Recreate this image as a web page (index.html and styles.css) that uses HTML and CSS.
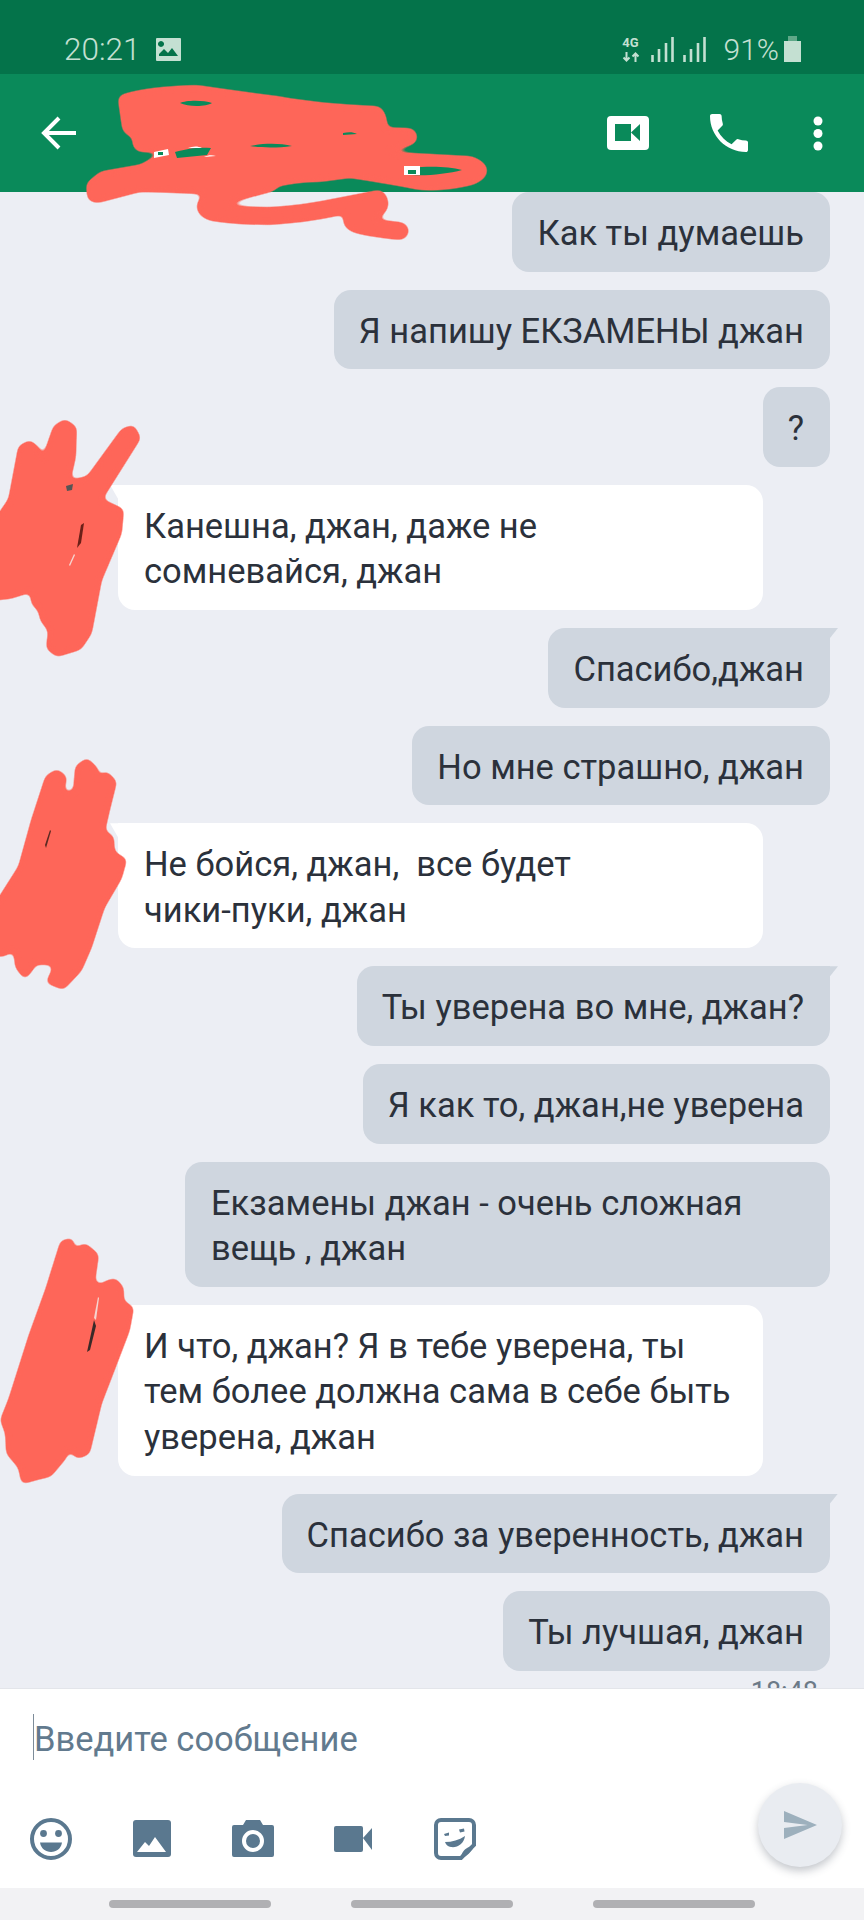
FILE: index.html
```html
<!DOCTYPE html>
<html lang="ru">
<head>
    <meta charset="UTF-8">
    <meta name="viewport" content="width=device-width, initial-scale=1.0">
    <title>Чат</title>
    <link rel="stylesheet" href="styles.css">
</head>
<body>
    <div class="phone">
        <div class="status">
            <div class="status-left">
                <span class="clock">20:21</span>
                <svg class="ico-pic" width="25" height="23" viewBox="0 0 25 23">
                    <path fill-rule="evenodd" d="M1 0h23a1 1 0 0 1 1 1v21a1 1 0 0 1-1 1H1a1 1 0 0 1-1-1V1a1 1 0 0 1 1-1zM3 16l5-5 4 4 4-5 6 8H3zM5 3a3 3 0 1 0 .01 0z" fill="#c4e0d2"/>
                </svg>
            </div>
            <div class="status-right">
                <div class="net">
                    <span class="net-label">4G</span>
                    <svg width="18" height="10" viewBox="0 0 18 10">
                        <path d="M4.500 0v8M1.500 5.500l3 3 3-3M13.500 10V2M10.500 4.500l3-3 3 3" fill="none" stroke="#c4e0d2" stroke-width="2"/>
                    </svg>
                </div>
                <svg class="signal" width="23" height="25" viewBox="0 0 23 25">
                    <path d="M1.500 25v-7M8 25v-13M15 25V6M21.500 25V0" stroke="#c4e0d2" stroke-width="2.600"/>
                </svg>
                <svg class="signal" width="23" height="25" viewBox="0 0 23 25">
                    <path d="M1.500 25v-7M8 25v-13M15 25V6M21.500 25V0" stroke="#c4e0d2" stroke-width="2.600"/>
                </svg>
                <span class="battery-text">91%</span>
                <svg width="17" height="26" viewBox="0 0 17 26">
                    <path d="M4 0h9v5H4z" fill="#5fa888"/>
                    <path d="M0 5h17v21H0z" fill="#c4e0d2"/>
                </svg>
            </div>
        </div>

        <div class="topbar">
            <svg class="back" width="36" height="34" viewBox="0 0 36 34">
                <path d="M35 17H3M18 2L3 17l15 15" fill="none" stroke="#fff" stroke-width="4"/>
            </svg>
            <div class="top-actions">
                <svg width="42" height="34" viewBox="0 0 42 34">
                    <rect width="42" height="34" rx="4" fill="#fff"/>
                    <path d="M8 8h16v17H8zM24 16.500L33 8v17z" fill="#0a8a5a"/>
                </svg>
                <svg class="call" width="38" height="38" viewBox="3 3 18 18">
                    <path fill="#fff" d="M6.620 10.790c1.440 2.830 3.760 5.140 6.590 6.590l2.200-2.200c.27-.27.67-.36 1.020-.24 1.120.37 2.330.57 3.570.57.55 0 1 .45 1 1V20c0 .55-.45 1-1 1-9.390 0-17-7.610-17-17 0-.55.45-1 1-1h3.500c.55 0 1 .45 1 1 0 1.250.2 2.450.57 3.570.11.35.03.74-.25 1.020l-2.200 2.200z"/>
                </svg>
                <svg class="dots" width="10" height="35" viewBox="0 0 10 35">
                    <circle cx="5" cy="5" r="4.500" fill="#fff"/>
                    <circle cx="5" cy="17.500" r="4.500" fill="#fff"/>
                    <circle cx="5" cy="30" r="4.500" fill="#fff"/>
                </svg>
            </div>
        </div>

        <div class="chat">
            <div class="msg out">Как ты думаешь</div>
            <div class="msg out">Я напишу ЕКЗАМЕНЫ джан</div>
            <div class="msg out">?</div>
            <div class="msg in first">Канешна, джан, даже не<br>сомневайся, джан</div>
            <div class="msg out first">Спасибо,джан</div>
            <div class="msg out">Но мне страшно, джан</div>
            <div class="msg in first">Не бойся, джан, &nbsp;все будет<br>чики-пуки, джан</div>
            <div class="msg out first">Ты уверена во мне, джан?</div>
            <div class="msg out">Я как то, джан,не уверена</div>
            <div class="msg out wide">Екзамены джан - очень сложная<br>вещь , джан</div>
            <div class="msg in first">И что, джан? Я в тебе уверена, ты<br>тем более должна сама в себе быть<br>уверена, джан</div>
            <div class="msg out first">Спасибо за уверенность, джан</div>
            <div class="msg out">Ты лучшая, джан</div>
            <div class="msg-time">18:48</div>
        </div>

        <div class="composer">
            <div class="input-row">
                <span class="caret"></span>
                <span class="placeholder">Введите сообщение</span>
            </div>
            <div class="tools">
                <svg width="44" height="44" viewBox="0 0 44 44">
                    <circle cx="22" cy="22" r="19" fill="none" stroke="#5a788f" stroke-width="4"/>
                    <circle cx="14.500" cy="16.500" r="3.400" fill="#5a788f"/>
                    <circle cx="29.500" cy="16.500" r="3.400" fill="#5a788f"/>
                    <path d="M11 25.500h22c-1 6-5.500 9.500-11 9.500s-10-3.500-11-9.500z" fill="#5a788f"/>
                </svg>
                <svg width="44" height="44" viewBox="0 0 44 44">
                    <rect x="3" y="3" width="38" height="37" rx="3" fill="#5a788f"/>
                    <path d="M7 35l8-10 4 4 6-9 11 15z" fill="#fff"/>
                </svg>
                <svg width="44" height="44" viewBox="0 0 44 44">
                    <path d="M3 8h9l3-5h14l3 5h9a2 2 0 0 1 2 2v28a2 2 0 0 1-2 2H3a2 2 0 0 1-2-2V10a2 2 0 0 1 2-2z" fill="#5a788f"/>
                    <circle cx="22" cy="24" r="9" fill="none" stroke="#fff" stroke-width="4"/>
                </svg>
                <svg width="44" height="44" viewBox="0 0 44 44">
                    <rect x="2" y="9" width="29" height="26" rx="2" fill="#5a788f"/>
                    <path d="M31 21l9-10v22z" fill="#5a788f"/>
                </svg>
                <svg width="44" height="44" viewBox="0 0 44 44">
                    <path d="M8 3h28a5 5 0 0 1 5 5v20L28 41H8a5 5 0 0 1-5-5V8a5 5 0 0 1 5-5z" fill="none" stroke="#5a788f" stroke-width="4"/>
                    <path d="M41 28c-1 1-12 2-13 13 4 0 13-8 13-13z" fill="#5a788f"/>
                    <path d="M11 17l5-1.500 0 3-4 .5zM26 12.500l5-1 .5 3-4.500 1zM12 25c7 0 14-2 20-6-1 8-8 12-14 11-3-.5-5-2-6-5z" fill="#5a788f"/>
                </svg>
            </div>
            <div class="send">
                <svg width="33" height="28" viewBox="2 3 21 18" preserveAspectRatio="none">
                    <path d="M2.010 21L23 12 2.010 3 2 10l15 2-15 2z" fill="#9db0bd"/>
                </svg>
            </div>
        </div>

        <div class="navbar">
            <span class="pill"></span>
            <span class="pill"></span>
            <span class="pill"></span>
        </div>

        <!-- scribbles drawn over the screenshot -->
        <svg class="scribbles" width="864" height="1920" viewBox="0 0 864 1920">
            <defs>
                <filter id="round" filterUnits="userSpaceOnUse" x="-20" y="0" width="600" height="1520" color-interpolation-filters="sRGB">
                    <feGaussianBlur stdDeviation="3"/>
                    <feComponentTransfer>
                        <feFuncA type="linear" slope="6" intercept="-2.500"/>
                    </feComponentTransfer>
                </filter>
            </defs>
            <g filter="url(#round)">
                <path d="M124 100Q150 92 197 91Q230 96 277 102Q320 110 377 112Q383 118 381 133L410 134Q414 138 408 140Q390 147 340 155L470 162Q492 170 472 179Q445 186 420 184Q390 178 350 172L320 176Q300 176 280 180L240 190L173 187L140 186L98 197L93 196L92 186L103 177L143 170L160 160L215 160L215 150L140 146L138 143L150 143L128 128Z" fill="#fe6659" stroke="#fe6659" stroke-width="12" stroke-linejoin="round"/>
                <path d="M270 183Q235 192 210 201Q200 208 212 212Q240 216 270 216Q305 214 337 207L378 199Q382 205 376 209L352 220Q350 226 400 231" fill="none" stroke="#fe6659" stroke-width="18" stroke-linecap="round" stroke-linejoin="round"/>
                <g fill="#fe6659" stroke="#fe6659" stroke-width="4" stroke-linejoin="round">
                    <path d="M55 427L65 421 75 428 74 457 68 483 78 480 88 478 123 430 133 427 139 438 100 500 107 503 122 510 120 533 100 580 90 633 80 648 57 655 48 648 50 630 42 620 40 610 33 603 32 590 10 597 -20 600 -20 543 10 500 20 447 30 442 39 450 40 470z"/>
                    <path d="M47 777L57 771 65 777 62 795 75 792 77 767 87 760 97 770 95 782 106 773 115 782 108 810 103 832 112 837 113 853 125 860 120 878 103 907 90 947 80 970 63 988 48 982 55 967 52 963 37 963 33 953 33 967 25 977 17 967 15 948 3 955 -20 953 -20 930 20 867 33 820z"/>
                    <path d="M62 1242L72 1240 72 1257 68 1272 75 1250 85 1245 97 1255 93 1283 102 1287 105 1283 115 1280 122 1288 122 1302 132 1308 128 1330 110 1377 100 1403 88 1453 78 1457 68 1447 65 1457 50 1475 37 1478 23 1482 20 1467 8 1453 7 1433 2 1420 10 1400 30 1337 47 1290z"/>
                </g>
            </g>
            <path d="M175 152c14-4 24-5 36-4l-4 7-30 3zM250 146c14-3 30-3 42 0-14 2-30 2-42 0zM180 103c6-3 24-3 32 0-6 4-24 4-32 0zM343 133c6-1 10-1 14 1l-14 1zM412 168c14-2 36-2 50 2-14 4-36 6-50 5z" fill="#0a8a5a"/>
            <path d="M154 152l14-3 1 6-15 3zM188 148c5-2 10-2 14 0zM204 157c4-2 8-2 12-1zM404 166h16v9h-16z" fill="#fff"/>
            <path d="M158 152h5v3h-5zM408 170h8v4h-8z" fill="#0a8a5a"/>
            <path d="M81 525l3-2-3 20-4 5z" fill="#6b2018"/>
            <path d="M66 486l7-2-1 6-5 1z" fill="#555"/>
            <path d="M50 830l1 1-5 17-1-3z" fill="#5a2a22"/>
            <path d="M94 1320l2 6-6 24-3 2z" fill="#3a2a28"/>
            <path d="M98 1297l1 1-3 22-2-2z" fill="#f5d5d0"/>
            <path d="M74 554l1 1-5 11-1-1z" fill="#f5d5d0"/>
        </svg>
    </div>
</body>
</html>
```

FILE: styles.css
```css
body {
    margin: 0;
    font-family: Roboto, "Liberation Sans", sans-serif;
}
.phone {
    position: relative;
    width: 864px;
    height: 1920px;
    overflow: hidden;
    background: #eceef4;
    display: flex;
    flex-direction: column;
}

/* status bar */
.status {
    height: 74px;
    flex: none;
    background: #04734a;
    color: #c4e0d2;
    display: flex;
    justify-content: space-between;
    align-items: center;
    padding: 24px 63px 0 64px;
    box-sizing: border-box;
}
.status-left {
    display: flex;
    align-items: center;
    gap: 15px;
}
.clock {
    font-size: 31.500px;
    font-weight: 300;
}
.status-right {
    display: flex;
    align-items: center;
}
.net {
    display: flex;
    flex-direction: column;
    align-items: center;
    gap: 4px;
    margin-right: 11px;
}
.net-label {
    font-size: 13px;
    line-height: 11px;
    font-weight: 700;
}
.signal {
    margin-right: 9px;
}
.battery-text {
    font-size: 30px;
    font-weight: 300;
    margin: 0 5px 0 9px;
}

/* header */
.topbar {
    height: 118px;
    flex: none;
    background: #0a8a5a;
    display: flex;
    justify-content: space-between;
    align-items: center;
    padding: 0 41px 0 41px;
    box-sizing: border-box;
}
.top-actions {
    display: flex;
    align-items: center;
}
.call {
    margin: 0 65px 0 61px;
}

/* messages */
.chat {
    height: 1496px;
    flex: none;
    overflow: hidden;
    box-sizing: border-box;
    padding-right: 34px;
    display: flex;
    flex-direction: column;
    align-items: flex-end;
    gap: 18px;
}
.msg {
    position: relative;
    flex: none;
    box-sizing: border-box;
    padding: 19px 26px 15px 25px;
    font-size: 34.500px;
    line-height: 45.600px;
    color: #2b313b;
    border-radius: 17px;
}
.out {
    background: #cfd6df;
}
.in {
    background: #fff;
    align-self: flex-start;
    margin-left: 118px;
    width: 645px;
    padding-left: 26px;
}
.wide {
    width: 645px;
    padding-left: 26px;
}
.out.first {
    border-top-right-radius: 0;
}
.out.first::after {
    content: "";
    position: absolute;
    top: 0;
    right: -8px;
    width: 8px;
    height: 10px;
    background: #cfd6df;
    clip-path: polygon(0 0, 100% 0, 0 100%);
}
.in.first {
    border-top-left-radius: 0;
}
.in.first::after {
    content: "";
    position: absolute;
    top: 0;
    left: -8px;
    width: 8px;
    height: 14px;
    background: #fff;
    clip-path: polygon(0 0, 100% 0, 100% 100%);
}
.msg-time {
    flex: none;
    margin: -11px 12px 0 0;
    font-size: 27px;
    line-height: 28px;
    color: #6c7a88;
}

/* input */
.composer {
    position: relative;
    flex: none;
    height: 200px;
    background: #fff;
    border-top: 1px solid #e3e5ea;
    box-sizing: border-box;
}
.input-row {
    display: flex;
    align-items: center;
    height: 46px;
    margin: 25px 0 0 33px;
}
.caret {
    width: 1px;
    height: 46px;
    background: #7d8c99;
}
.placeholder {
    font-size: 34.500px;
    line-height: 46px;
    padding-top: 4px;
    color: #627a8e;
}
.tools {
    display: flex;
    gap: 57px;
    margin: 57px 0 0 29px;
}
.send {
    position: absolute;
    right: 22px;
    bottom: 21px;
    width: 84px;
    height: 84px;
    border-radius: 50%;
    background: #e9ecf1;
    box-shadow: 0 4px 8px rgba(60, 70, 85, 0.3);
    display: flex;
    align-items: center;
    justify-content: center;
}

/* bottom nav */
.navbar {
    flex: 1;
    background: #f2f2f4;
    display: flex;
    align-items: center;
    justify-content: center;
    gap: 80px;
}
.pill {
    width: 162px;
    height: 8px;
    border-radius: 4px;
    background: #b0b0b3;
}

.scribbles {
    position: absolute;
    top: 0;
    left: 0;
    pointer-events: none;
}
```
